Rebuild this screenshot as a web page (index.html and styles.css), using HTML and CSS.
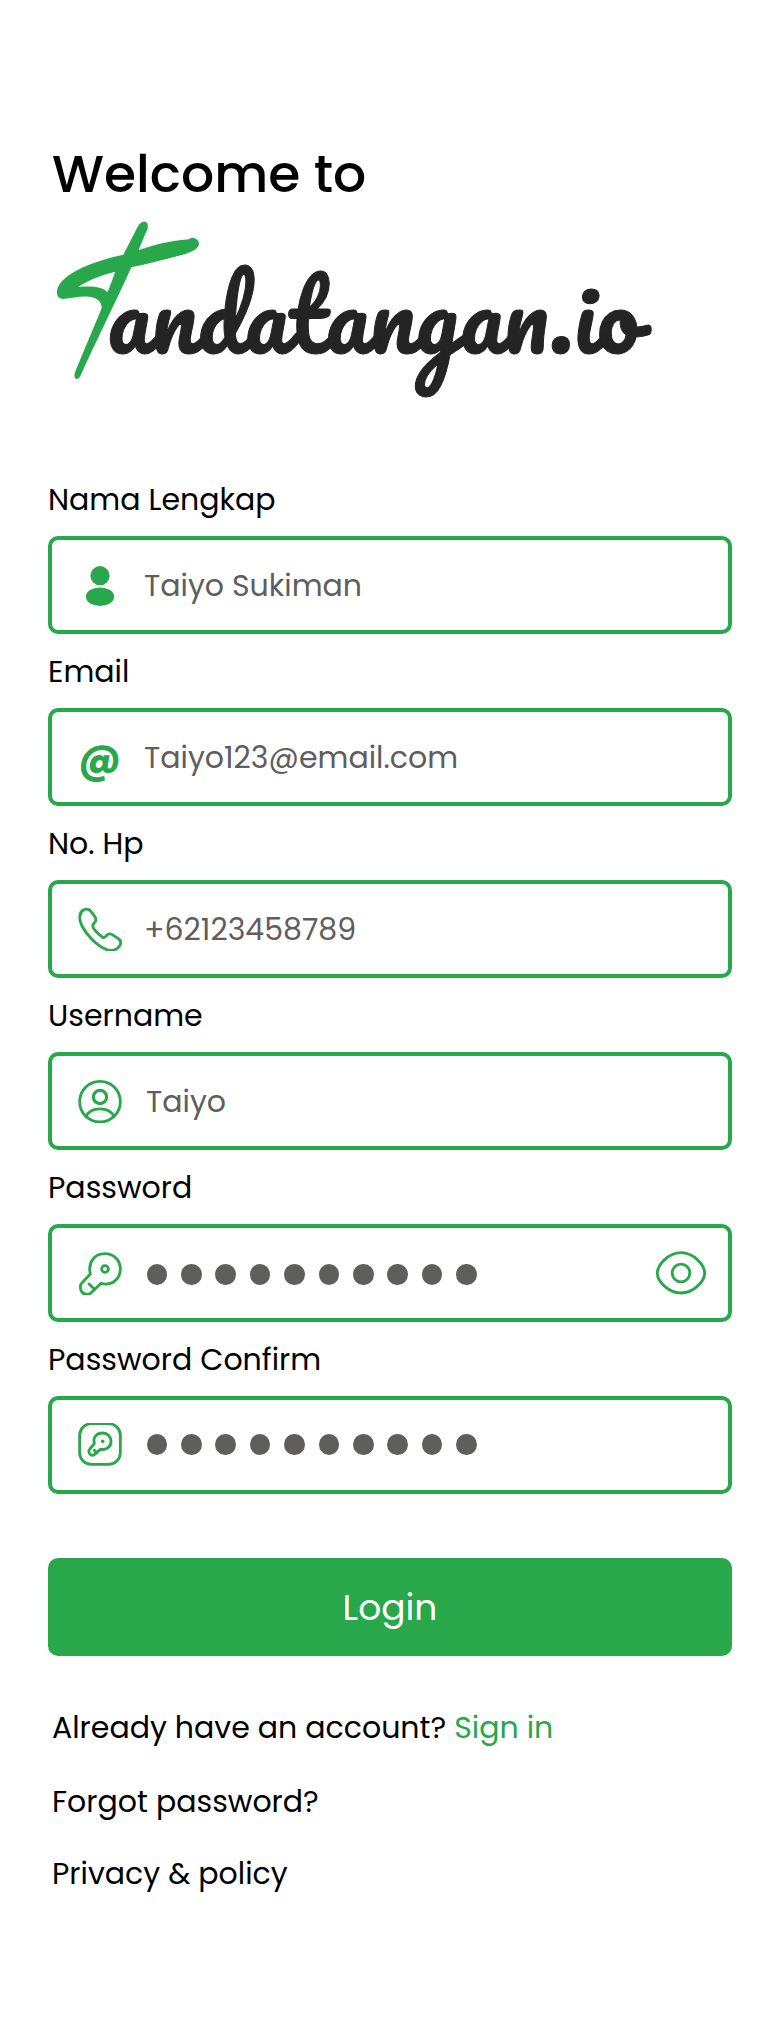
FILE: index.html
```html
<!DOCTYPE html>
<html lang="id">
<head>
<meta charset="utf-8">
<title>Tandatangan.io</title>
<link rel="stylesheet" href="styles.css">
</head>
<body>
<main class="page">
  <h1 class="welcome">Welcome to</h1>
  <svg class="logo" viewBox="48 210 620 190" width="620" height="190">
    <g transform="translate(40 200) scale(.33333)">
      <path class="mark" fill-rule="evenodd" d="M288 90C300 62 317 58 323 73C325 88 320 93 316 101L296 150C340 136 390 122 447 118C455 110 476 115 477 131C477 145 455 157 425 165C370 180 320 192 274 202C230 300 165 430 122 526C117 541 103 540 103 526L106 514L185 325C186 305 170 291 145 290C120 288 95 294 70 297C48 297 44 270 62 248C95 208 180 178 250 164ZM115 261C160 257 190 262 203 277L226 215C180 226 140 243 115 261Z"/>
    </g>
    <text class="wordmark" x="107" y="353.5">andatangan</text>
    <text class="wordmark domain" x="549.5 573.5" y="353.5">.io</text>
  </svg>

  <form class="form">
    <div class="field">
      <span class="label">Nama Lengkap</span>
      <div class="box">
        <svg class="icon solid" viewBox="0 0 44 44"><circle cx="22" cy="12.7" r="9.6"/><ellipse cx="22" cy="33.7" rx="14.1" ry="9.3"/></svg>
        <span class="value">Taiyo Sukiman</span>
      </div>
    </div>
    <div class="field">
      <span class="label">Email</span>
      <div class="box">
        <span class="icon at">@</span>
        <span class="value">Taiyo123@email.com</span>
      </div>
    </div>
    <div class="field">
      <span class="label">No. Hp</span>
      <div class="box">
        <svg class="icon" viewBox="0 0 44 44"><g transform="translate(-38 -87) scale(.33333)"><path d="M130 270C142 264 150 269 155 277L166 292C170 300 167 305 162 310C155 316 158 322 164 330C172 339 180 346 188 352C195 355 197 350 202 344C208 340 214 341 220 346L234 355C243 361 244 370 238 379C231 390 215 394 200 389C170 378 140 345 126 318C116 298 117 278 130 270Z"/></g></svg>
        <span class="value">+62123458789</span>
      </div>
    </div>
    <div class="field">
      <span class="label">Username</span>
      <div class="box">
        <svg class="icon" viewBox="0 0 44 44"><g transform="translate(-38 -79) scale(.33333)"><circle cx="180" cy="305" r="61"/><circle class="bold" cx="180" cy="291" r="20"/><path d="M138 349C153 319 207 319 222 349"/></g></svg>
        <span class="value user">Taiyo</span>
      </div>
    </div>
    <div class="field">
      <span class="label">Password</span>
      <div class="box">
        <svg class="icon" viewBox="0 0 44 44"><g transform="translate(-38 -81) scale(.33333)"><path d="M151 312C143 276 164 251 195 251C221 251 241 271 241 297C241 327 215 349 183 340L152 370C148 374 140 372 133 371C126 370 124 365 122 358C120 350 119 346 125 340ZM147 342L162 356"/><circle cx="195" cy="297" r="10"/></g></svg>
        <span class="dots lower"><i></i><i></i><i></i><i></i><i></i><i></i><i></i><i></i><i></i><i></i></span>
        <svg class="eye" viewBox="0 0 52 44"><g transform="translate(-35 -41) scale(.33333)"><path d="M112 190C112 165 145 128 183 128C221 128 254 165 254 190C254 214 221 249 183 249C145 249 112 214 112 190Z"/><circle cx="183" cy="189" r="26.5"/></g></svg>
      </div>
    </div>
    <div class="field">
      <span class="label">Password Confirm</span>
      <div class="box">
        <svg class="icon" viewBox="0 0 44 44"><g transform="translate(-38 -83) scale(.33333)"><rect x="119" y="251" width="122" height="122" rx="35"/><path d="M163 311C158 291 170 279 188 279C203 279 213 290 213 304C213 322 198 331 181 328L163 344C155 348 147 344 147 335C146 331 148 328 152 324ZM163 331L170 338"/><circle class="dot" cx="188" cy="304" r="5.5"/></g></svg>
        <span class="dots upper"><i></i><i></i><i></i><i></i><i></i><i></i><i></i><i></i><i></i><i></i></span>
      </div>
    </div>
    <button class="login" type="button">Login</button>
  </form>

  <nav class="links">
    <p class="link">Already have an account? <a class="signin">Sign in</a></p>
    <p class="link">Forgot password?</p>
    <p class="link privacy">Privacy &amp; policy</p>
  </nav>
</main>
</body>
</html>
```
FILE: styles.css
```css
* { box-sizing: border-box; }
body {
  margin: 0;
  background: #fff;
  color: #000;
  font-family: Poppins, Inter, sans-serif;
  font-size: 30px;
  line-height: 36px;
}
.page { width: 780px; height: 2018px; padding: 144px 48px 0; }
.welcome {
  margin: 0 0 6px 4px;
  font-size: 52px;
  font-weight: 500;
  line-height: 60px;
}
.logo { display: block; margin-bottom: 82px; }
.mark { fill: #28a74b; }
.wordmark {
  font: 400 93.5px Pacifico, cursive;
  fill: #242424;
  stroke: #242424;
  stroke-width: 1;
}
.domain { font-feature-settings: "calt" 0; }
.form { display: flex; flex-direction: column; gap: 20px; }
.field { display: flex; flex-direction: column; gap: 18px; }
.label { height: 36px; white-space: nowrap; }
.box {
  display: flex;
  align-items: center;
  height: 98px;
  padding: 0 21px 0 26px;
  border: 4px solid #28a74b;
  border-radius: 10px;
}
.icon, .eye {
  flex: none;
  width: 44px;
  height: 44px;
  fill: none;
  stroke: #28a74b;
  stroke-width: 8.5;
  stroke-linecap: round;
  stroke-linejoin: round;
}
.eye { width: 52px; margin-left: auto; }
.solid { fill: #28a74b; stroke: none; }
.bold { stroke-width: 9.5; }
.dot { fill: #28a74b; stroke: none; }
.at {
  padding-right: 2px;
  color: #28a74b;
  font: 700 40px/48px Poppins, sans-serif;
  text-align: center;
}
.value {
  margin-left: 22px;
  padding-top: 2px;
  color: #605d5d;
  white-space: nowrap;
}
.user { margin-left: 24px; }
.dots { display: flex; gap: 13.9px; margin-left: 24.7px; }
.dots i { width: 20.5px; height: 21px; border-radius: 50%; background: #605d5d; }
.lower { margin-top: 3px; }
.upper { margin-bottom: 1px; }
.login {
  height: 98px;
  margin-top: 44px;
  padding-top: 3px;
  border: 0;
  border-radius: 10px;
  background: #28a74b;
  color: #fff;
  font: inherit;
  font-size: 36px;
}
.links { display: flex; flex-direction: column; gap: 38px; padding: 54px 0 0 4px; }
.link { margin: 0; white-space: nowrap; }
.signin { color: #28a74b; }
.privacy { margin-top: -2px; }
```
